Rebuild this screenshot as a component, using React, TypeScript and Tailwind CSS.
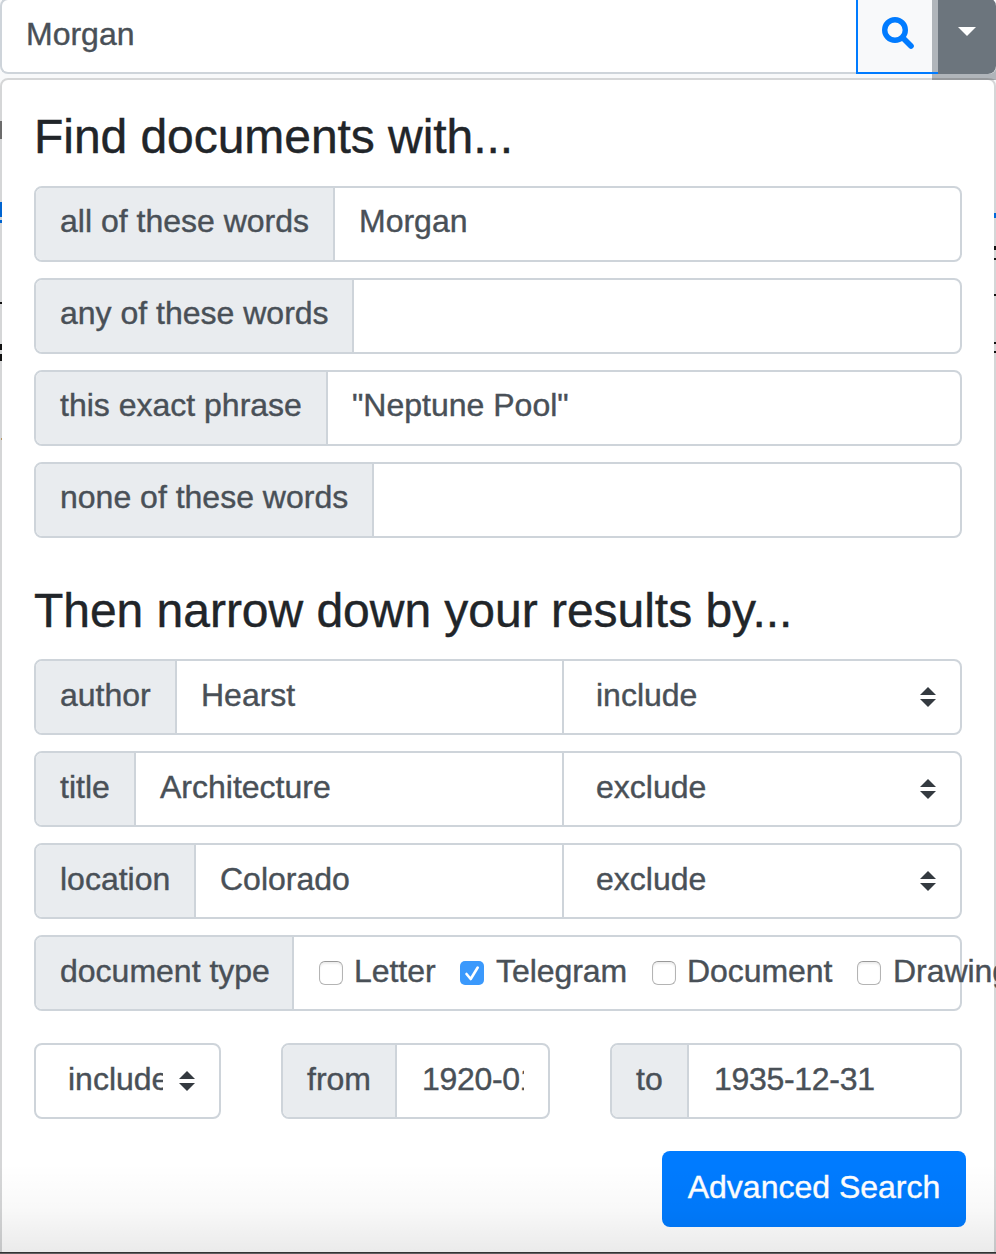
import type { ReactNode } from "react";

function Label({ width, low, children }: { width: string; low?: boolean; children: ReactNode }) {
  return (
    <div
      className={`${width} ${low ? "pt-[10px]" : "pt-[9px]"} shrink-0 border-r-2 border-[#ced4da] bg-[#e9ecef] pl-6 leading-[48px]`}
    >
      {children}
    </div>
  );
}

function Arrows() {
  return (
    <svg className="h-5 w-4 shrink-0" viewBox="0 0 16 20" fill="#343a40">
      <path d="M8 0 16 8H0zM0 12h16l-8 8z" />
    </svg>
  );
}

function Row({ children }: { children: ReactNode }) {
  return (
    <div className="flex h-[76px] w-[928px] overflow-hidden rounded-lg border-2 border-[#ced4da] bg-white">
      {children}
    </div>
  );
}

function Value({ low, children }: { low?: boolean; children?: ReactNode }) {
  return <div className={`min-w-0 flex-1 pl-6 leading-[48px] ${low ? "pt-[10px]" : "pt-[9px]"}`}>{children}</div>;
}

function Choice({ children }: { children: ReactNode }) {
  return (
    <div className="flex w-[398px] shrink-0 items-center justify-between border-l-2 border-[#ced4da] pl-8 pr-6">
      <span className="-mt-[4px] leading-[48px]">{children}</span>
      <Arrows />
    </div>
  );
}

function Check({ label, checked, width, gap }: { label: string; checked?: boolean; width: string; gap: string }) {
  return (
    <div className={`flex shrink-0 ${width}`}>
      <div
        className={
          checked
            ? "mt-[24px] h-6 w-6 shrink-0 rounded-[5px] bg-[#3b99fc]"
            : "mt-[24px] h-6 w-6 shrink-0 rounded-[6px] border border-[#b4b4b4] border-t-[#999] bg-white shadow-[inset_0_2px_2px_#eee]"
        }
      >
        {checked && (
          <svg viewBox="0 0 24 24" fill="none" stroke="white" strokeWidth="2.6" strokeLinecap="round" strokeLinejoin="round">
            <path d="m6.500 13 4.200 5L17.700 6.500" />
          </svg>
        )}
      </div>
      <span className={`${gap} mt-[10px] whitespace-nowrap leading-[48px] tracking-[-0.05px]`}>{label}</span>
    </div>
  );
}

export default function App() {
  return (
    <div className="relative h-[1254px] w-[996px] overflow-hidden bg-[#f8f9fa] font-['Liberation_Sans',Arial,sans-serif] text-[32px] text-[#495057] [-webkit-text-stroke:0.4px]">
      <div className="-mt-[2px] flex h-[76px]">
        <div className="w-[856px] rounded-l-lg border-2 border-r-0 border-[#ced4da] bg-white pl-6 pt-[10px] leading-[48px]">
          Morgan
        </div>
        <div className="flex w-[82px] justify-center border-2 border-r-0 border-[#007bff] bg-[#f8f9fa] pt-[17px]">
          <svg className="h-8 w-8" viewBox="0 0 32 32" fill="none" stroke="#007bff" strokeLinecap="round">
            <circle cx="13" cy="13" r="10.300" strokeWidth="5.400" />
            <path d="m21.500 21.500 7.500 7.500" strokeWidth="5.600" />
          </svg>
        </div>
        <div className="w-[58px] rounded-r-lg bg-[#6c757d]">
          <svg className="ml-5 mt-[29px] h-[9px] w-[18px]" viewBox="0 0 18 9" fill="white">
            <path d="M0 0h18L9 9z" />
          </svg>
        </div>
      </div>
      <div className="mt-1 h-[1190px] rounded-lg border-2 border-[#d5d6d7] bg-white px-8 pt-6">
        <h2 className="pt-[4px] text-[48px] leading-[58px] tracking-[-0.05px] text-[#212529]">Find documents with...</h2>
        <div className="mt-[20px] flex flex-col gap-4">
          <Row><Label width="w-[299px]">all of these words</Label><Value>Morgan</Value></Row>
          <Row><Label width="w-[318px]">any of these words</Label><Value /></Row>
          <Row><Label width="w-[292px]">this exact phrase</Label><Value>"Neptune Pool"</Value></Row>
          <Row><Label width="w-[338px]">none of these words</Label><Value /></Row>
        </div>
        <h2 className="mt-[44px] text-[48px] leading-[58px] tracking-[-0.03px] text-[#212529]">Then narrow down your results by...</h2>
        <div className="mt-[19px] flex flex-col gap-4">
          <Row><Label low width="w-[141px]">author</Label><Value low>Hearst</Value><Choice>include</Choice></Row>
          <Row><Label low width="w-[100px]">title</Label><Value low>Architecture</Value><Choice>exclude</Choice></Row>
          <Row><Label low width="w-[160px]">location</Label><Value low>Colorado</Value><Choice>exclude</Choice></Row>
          <div className="flex h-[76px] w-[928px] rounded-lg border-2 border-[#ced4da]">
            <div className="w-[258px] shrink-0 rounded-l-[6px] border-r-2 border-[#ced4da] bg-[#e9ecef] pl-6 pt-[10px] leading-[48px]">document type</div>
            <div className="flex min-w-0 flex-1 pl-[25px]">
              <Check label="Letter" width="w-[141px]" gap="ml-[11px]" />
              <Check label="Telegram" checked width="w-[192px]" gap="ml-[12px]" />
              <Check label="Document" width="w-[205px]" gap="ml-[11px]" />
              <Check label="Drawing" width="w-[160px]" gap="ml-[12px]" />
            </div>
          </div>
        </div>
        <div className="mt-8 flex w-[928px] justify-between">
          <div className="flex h-[76px] w-[187px] items-center justify-between rounded-lg border-2 border-[#ced4da] pl-8 pr-6">
            <span className="-mt-[4px] w-[95px] overflow-hidden leading-[48px]">include</span>
            <Arrows />
          </div>
          <div className="flex h-[76px] w-[269px] overflow-hidden rounded-lg border-2 border-[#ced4da]">
            <Label low width="w-[114px]">from</Label>
            <div className="ml-[25px] mt-[10px] w-[102px] overflow-hidden whitespace-nowrap leading-[48px] tracking-[-0.3px]">1920-01-01</div>
          </div>
          <div className="flex h-[76px] w-[352px] overflow-hidden rounded-lg border-2 border-[#ced4da]">
            <Label low width="w-[77px]">to</Label>
            <div className="ml-[25px] mt-[10px] leading-[48px] tracking-[-0.3px]">1935-12-31</div>
          </div>
        </div>
        <div className="-mr-1 mt-8 flex justify-end">
          <button className="h-[76px] w-[304px] rounded-lg bg-[#007bff] pb-[4px] text-white">Advanced Search</button>
        </div>
      </div>
      <div className="absolute left-[932px] top-0 h-[72px] w-[6px] bg-[#b0b5ba]" />
      <div className="absolute left-[932px] top-[72px] h-[2px] w-[6px] bg-[#007bff]" />
      <svg className="absolute left-[932px] top-[66px] h-[14px] w-16" viewBox="0 0 64 14">
        <path d="M6 8h50q8 0 8-8v14H0V8z" fill="#b0b5ba" />
        <path d="M0 12h55q5 0 9 2H0z" fill="#96999c" />
        <path d="M0 6h6v2H0z" fill="#007bff" />
      </svg>
      <svg className="absolute left-0 top-[110px] h-[340px] w-[2px]" viewBox="0 0 2 340">
        <path d="M0 11h2v18H0z" fill="#6c6c6c" />
        <path d="M0 92h2v15H0zM0 110h2v3H0z" fill="#0064d0" />
        <path d="M0 192h2v2H0zM0 234h2v6H0zM0 244h2v7H0z" fill="#111" />
        <path d="M1 328h1v2H1z" fill="#b69665" />
      </svg>
      <svg className="absolute left-[994px] top-[210px] h-[150px] w-[2px]" viewBox="0 0 2 150">
        <path d="M0 3h2v5H0z" fill="#0069d9" />
        <path d="M0 36h2v4H0zM0 48h2v2H0zM0 84h2v2H0zM0 132h2v2H0zM0 141h2v2H0z" fill="#111" />
      </svg>
      <div className="absolute bottom-[2px] left-0 h-[88px] w-full bg-linear-to-b from-transparent via-black/[0.025] to-black/[0.08]" />
      <div className="absolute bottom-0 left-0 h-[2px] w-full border-t border-[#333] bg-[#605e60]" />
    </div>
  );
}
